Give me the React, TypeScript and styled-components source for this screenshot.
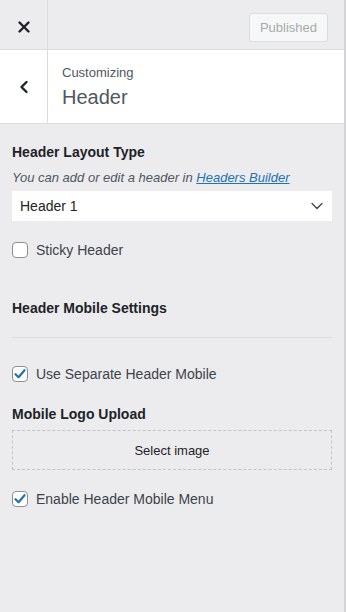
import React from 'react';
import styled, { createGlobalStyle } from 'styled-components';

const GlobalStyle = createGlobalStyle`
  html, body { margin: 0; padding: 0; background: #ececee; }
  body { font-family: "Liberation Sans", Arial, sans-serif; color: #1d2327; }
`;

const Panel = styled.div`
  width: 344px;
  height: 612px;
  background: #ececee;
  border-right: 2px solid #d4d4d6;
  box-sizing: content-box;
  display: flex;
  flex-direction: column;
`;

const TopBar = styled.div`
  height: 49px;
  display: flex;
  align-items: stretch;
  border-bottom: 1px solid #dcdcde;
`;

const IconCell = styled.div<{ $pt?: number }>`
  width: 47px;
  border-right: 1px solid #dcdcde;
  display: flex;
  align-items: center;
  justify-content: center;
  padding-top: ${p => p.$pt ?? 0}px;
  color: #1d2327;
`;

const TopRight = styled.div`
  flex: 1;
  display: flex;
  align-items: center;
  justify-content: flex-end;
  padding: 5px 16px 0 0;
`;

const PublishedBtn = styled.button`
  height: 29px;
  padding: 0 10px;
  border: 1px solid #dcdcde;
  border-radius: 3px;
  background: #f6f7f7;
  color: #a7aaad;
  font-family: "Liberation Sans", Arial, sans-serif;
  font-size: 13px;
`;

const SectionHead = styled.div`
  height: 73px;
  background: #fff;
  display: flex;
  border-bottom: 1px solid #dcdcde;
`;

const TitleBox = styled.div`
  padding: 14px 0 0 14px;
  display: flex;
  flex-direction: column;
`;

const Small = styled.span`
  font-size: 13px;
  color: #50575e;
  line-height: 18px;
`;

const Big = styled.span`
  font-size: 20px;
  color: #50575e;
  font-weight: 300;
  line-height: 26px;
  margin-top: 2px;
`;

const Content = styled.div`
  padding: 18px 12px 0 12px;
  display: flex;
  flex-direction: column;
`;

const Heading = styled.div<{ $mt?: number }>`
  font-size: 14px;
  font-weight: 700;
  color: #1d2327;
  line-height: 20px;
  margin-top: ${p => p.$mt ?? 0}px;
`;

const Desc = styled.div`
  font-size: 13px;
  font-style: italic;
  color: #50575e;
  line-height: 18px;
  margin-top: 7px;
  a { color: #2271b1; text-decoration: underline; }
`;

const SelectBox = styled.div`
  margin-top: 4px;
  height: 30px;
  background: #fff;
  display: flex;
  align-items: center;
  justify-content: space-between;
  padding: 0 8px;
  font-size: 14px;
  color: #1d2327;
`;

const CheckRow = styled.label<{ $mt?: number }>`
  display: flex;
  align-items: center;
  gap: 8px;
  font-size: 14px;
  color: #3c434a;
  margin-top: ${p => p.$mt ?? 0}px;
`;

const Box = styled.span`
  width: 14px;
  height: 14px;
  border: 1px solid #8c8f94;
  border-radius: 4px;
  background: #fff;
  display: flex;
  align-items: center;
  justify-content: center;
`;

const Divider = styled.hr`
  border: 0;
  border-top: 1px solid #dcdcde;
  margin: 19px 0 0 0;
`;

const Dropzone = styled.div`
  margin-top: 6px;
  height: 38px;
  border: 1px dashed #c3c4c7;
  display: flex;
  align-items: center;
  justify-content: center;
  font-size: 13px;
  color: #1d2327;
`;

const Check: React.FC<{ checked?: boolean }> = ({ checked }) => (
  <Box>
    {checked && (
      <svg width="14" height="14" viewBox="0 0 14 14">
        <path d="M2.5 7.2 L5.6 10.2 L11.5 3.2" fill="none" stroke="#2271b1" strokeWidth="2.2" strokeLinecap="round" strokeLinejoin="round" />
      </svg>
    )}
  </Box>
);

const App: React.FC = () => (
  <>
    <GlobalStyle />
    <Panel>
      <TopBar>
        <IconCell $pt={4}>
          <svg width="14" height="14" viewBox="0 0 14 14">
            <path d="M2.5 2.5 L11.5 11.5 M11.5 2.5 L2.5 11.5" stroke="#1d2327" strokeWidth="2.4" strokeLinecap="round" />
          </svg>
        </IconCell>
        <TopRight>
          <PublishedBtn>Published</PublishedBtn>
        </TopRight>
      </TopBar>
      <SectionHead>
        <IconCell>
          <svg width="12" height="14" viewBox="0 0 12 14">
            <path d="M8.5 2 L3.5 7 L8.5 12" fill="none" stroke="#1d2327" strokeWidth="2.4" strokeLinecap="round" strokeLinejoin="round" />
          </svg>
        </IconCell>
        <TitleBox>
          <Small>Customizing</Small>
          <Big>Header</Big>
        </TitleBox>
      </SectionHead>
      <Content>
        <Heading>Header Layout Type</Heading>
        <Desc>You can add or edit a header in <a>Headers Builder</a></Desc>
        <SelectBox>
          <span>Header 1</span>
          <svg width="14" height="14" viewBox="0 0 14 14">
            <path d="M2 4.5 L7 9.5 L12 4.5" fill="none" stroke="#3c434a" strokeWidth="1.3" strokeLinecap="round" strokeLinejoin="round" />
          </svg>
        </SelectBox>
        <CheckRow $mt={21}>
          <Check />
          Sticky Header
        </CheckRow>
        <Heading $mt={40}>Header Mobile Settings</Heading>
        <Divider />
        <CheckRow $mt={28}>
          <Check checked />
          Use Separate Header Mobile
        </CheckRow>
        <Heading $mt={22}>Mobile Logo Upload</Heading>
        <Dropzone>Select image</Dropzone>
        <CheckRow $mt={21}>
          <Check checked />
          Enable Header Mobile Menu
        </CheckRow>
      </Content>
    </Panel>
  </>
);

export default App;
